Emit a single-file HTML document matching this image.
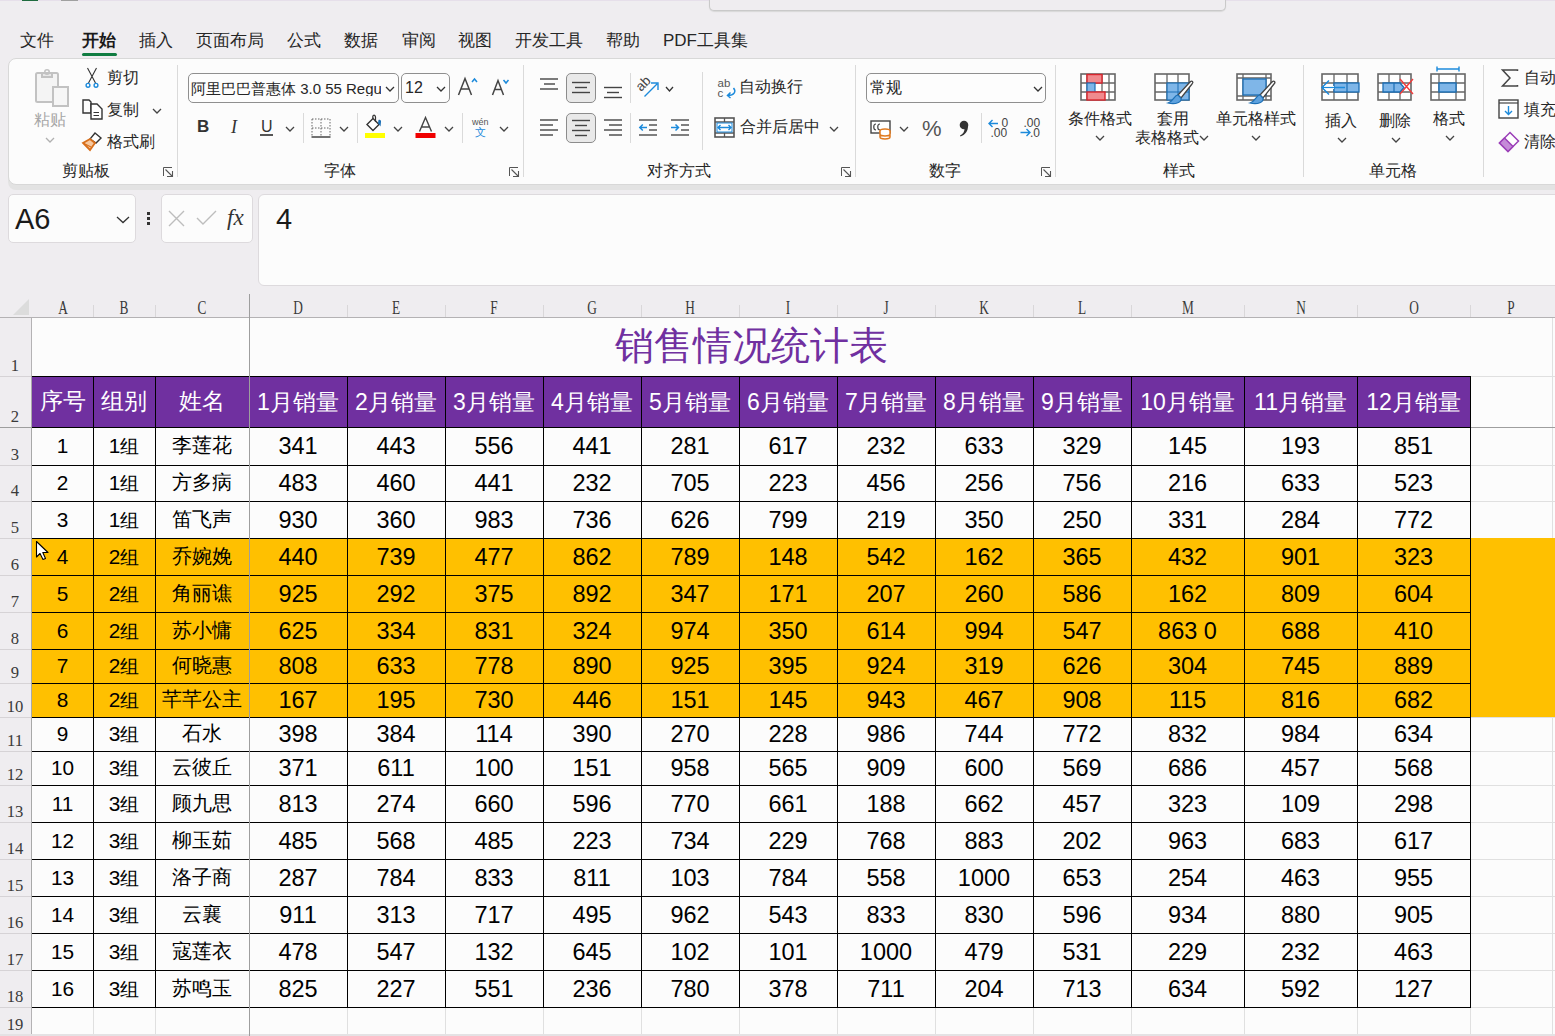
<!DOCTYPE html><html><head><meta charset="utf-8"><style>
html,body{margin:0;padding:0;}
body{width:1555px;height:1036px;overflow:hidden;position:relative;background:#EFEDF0;font-family:"Liberation Sans",sans-serif;color:#262626;}
.a{position:absolute;box-sizing:border-box;}
.t{position:absolute;white-space:nowrap;line-height:1;}
.rib{font-size:16px;color:#262626;}
.cell{font-size:20px;color:#000;}
.cell .dg{font-size:23.5px;}
.sm{font-size:19px;}
.sm .dg{font-size:20.8px;}
.hd{font-size:22.5px;color:#fff;}
.hd .dg{font-size:23px;}
.rn{font-family:"Liberation Serif",serif;font-size:17.5px;color:#3a3a3a;transform:scaleX(.95);}
.ch{font-family:"Liberation Serif",serif;font-size:18.5px;color:#3a3a3a;transform:scaleX(.72);}
svg{position:absolute;overflow:visible;}
</style></head><body>
<div class="a " style="left:0px;top:0px;width:1555px;height:1px;background:#E6DFEA;"></div>
<div class="a " style="left:709px;top:-20px;width:517px;height:31px;border:1px solid #C9C9C9;border-top:none;border-radius:0 0 5px 5px;background:#EFEDF0;box-shadow:0 1px 1px #D8D8D8;"></div>
<div class="a " style="left:22px;top:0px;width:16px;height:1px;background:#1F6B3F;"></div>
<div class="a " style="left:61px;top:0px;width:17px;height:1px;background:#A0A0A0;"></div>
<div class="t " style="left:20px;top:32px;font-size:17px;">文件</div>
<div class="t " style="left:82px;top:32px;font-size:17px;font-weight:bold;color:#1a1a1a;">开始</div>
<div class="t " style="left:139px;top:32px;font-size:17px;">插入</div>
<div class="t " style="left:196px;top:32px;font-size:17px;">页面布局</div>
<div class="t " style="left:287px;top:32px;font-size:17px;">公式</div>
<div class="t " style="left:344px;top:32px;font-size:17px;">数据</div>
<div class="t " style="left:402px;top:32px;font-size:17px;">审阅</div>
<div class="t " style="left:458px;top:32px;font-size:17px;">视图</div>
<div class="t " style="left:515px;top:32px;font-size:17px;">开发工具</div>
<div class="t " style="left:606px;top:32px;font-size:17px;">帮助</div>
<div class="t " style="left:663px;top:32px;font-size:17px;">PDF工具集</div>
<div class="a " style="left:82px;top:53px;width:35px;height:3px;background:#107C41;border-radius:2px;"></div>
<div class="a " style="left:8px;top:58px;width:1600px;height:127px;background:#FCFCFC;border:1px solid #D8D8D8;border-radius:8px;box-shadow:0 5px 0 #E3E3E3;"></div>
<svg style="left:35px;top:69px" width="35" height="39" viewBox="0 0 35 39"><rect x="1" y="4" width="22" height="29" rx="1.5" fill="#F4F4F4" stroke="#C2C2C2" stroke-width="2"/><path d="M7,4 h10 v4 h-10 z" fill="#E8E8E8" stroke="#C2C2C2" stroke-width="2"/><circle cx="12" cy="3" r="2.2" fill="none" stroke="#C2C2C2" stroke-width="1.6"/><rect x="18" y="18" width="15" height="19" fill="#F6F6F6" stroke="#C2C2C2" stroke-width="2"/></svg>
<div class="t rib" style="left:34px;top:112px;color:#A6A6A6;">粘贴</div>
<svg style="left:45px;top:137px" width="10" height="6" viewBox="0 0 10 6"><polyline points="1,1 5.0,5 9,1" fill="none" stroke="#B0B0B0" stroke-width="1.3"/></svg>
<svg style="left:84px;top:67px" width="17" height="22" viewBox="0 0 17 22"><path d="M3.5,1 L11.5,16 M12.5,1 L4.5,16" stroke="#333" stroke-width="1.1" fill="none"/><circle cx="4" cy="18.3" r="1.9" fill="#fff" stroke="#1C8ADB" stroke-width="1.4"/><circle cx="12" cy="18.3" r="1.9" fill="#fff" stroke="#1C8ADB" stroke-width="1.4"/></svg>
<div class="t rib" style="left:107px;top:70px;">剪切</div>
<svg style="left:82px;top:99px" width="22" height="22" viewBox="0 0 22 22"><path d="M1,1 H7 L9,3 V14 H1 Z" fill="none" stroke="#333" stroke-width="1.4"/><path d="M9,5 H15 L20,10 V20 H9 Z" fill="#fff" stroke="#333" stroke-width="1.4"/><path d="M11.5,13.5 H17 M11.5,16.5 H17" stroke="#333" stroke-width="1"/></svg>
<div class="t rib" style="left:107px;top:102px;">复制</div>
<svg style="left:152px;top:108px" width="10" height="6" viewBox="0 0 10 6"><polyline points="1,1 5.0,5 9,1" fill="none" stroke="#444" stroke-width="1.3"/></svg>
<svg style="left:81px;top:131px" width="22" height="21" viewBox="0 0 22 21"><path d="M14,2 L20,7 L15,12 L9,8 Z" fill="#fff" stroke="#333" stroke-width="1.4"/><path d="M9,8 L14,12 L9,19 L2,12 Z" fill="#F7C9A0" stroke="#D86F1B" stroke-width="1.8"/><path d="M2,12 L10,16" stroke="#D86F1B" stroke-width="1.2"/></svg>
<div class="t rib" style="left:107px;top:134px;">格式刷</div>
<div class="t rib" style="left:62px;top:163px;">剪贴板</div>
<svg style="left:163px;top:167px" width="11" height="11" viewBox="0 0 11 11"><path d="M0.5,9 V0.5 H9" fill="none" stroke="#555" stroke-width="1"/><path d="M2.5,2.5 L9.5,9.5 M4,9.5 H9.5 V4" fill="none" stroke="#555" stroke-width="1.1"/></svg>
<div class="a " style="left:177px;top:65px;width:1px;height:112px;background:#DADADA;"></div>
<div class="a " style="left:188px;top:73px;width:211px;height:30px;border:1px solid #8F8F8F;border-radius:5px;background:#FDFDFD;overflow:hidden;"></div>
<div class="t rib" style="left:191px;top:81px;width:190px;overflow:hidden;font-size:15px;">阿里巴巴普惠体 3.0 55 Regular</div>
<svg style="left:385px;top:86px" width="10" height="6" viewBox="0 0 10 6"><polyline points="1,1 5.0,5 9,1" fill="none" stroke="#333" stroke-width="1.3"/></svg>
<div class="a " style="left:401px;top:73px;width:49px;height:30px;border:1px solid #8F8F8F;border-radius:5px;background:#FDFDFD;"></div>
<div class="t rib" style="left:405px;top:80px;font-size:16px;">12</div>
<svg style="left:436px;top:86px" width="10" height="6" viewBox="0 0 10 6"><polyline points="1,1 5.0,5 9,1" fill="none" stroke="#333" stroke-width="1.3"/></svg>
<svg style="left:457px;top:76px" width="24" height="22" viewBox="0 0 24 22"><path d="M1.5,19 L8,2.5 L14.5,19 M4,13 H12" fill="none" stroke="#444" stroke-width="1.5"/><path d="M15,6 L17.5,3 L20,6" fill="none" stroke="#1C8ADB" stroke-width="1.5"/></svg>
<svg style="left:491px;top:77px" width="22" height="22" viewBox="0 0 22 22"><path d="M1.5,18 L7,3.5 L12.5,18 M3.6,12.5 H10.4" fill="none" stroke="#444" stroke-width="1.5"/><path d="M12.5,3 L15,6 L17.5,3" fill="none" stroke="#1C8ADB" stroke-width="1.5"/></svg>
<div class="t " style="left:197px;top:118px;font-weight:bold;font-size:17px;color:#333;">B</div>
<div class="t " style="left:231px;top:118px;font-family:'Liberation Serif',serif;font-style:italic;font-size:18px;color:#333;">I</div>
<div class="t " style="left:261px;top:119px;font-size:16px;color:#333;">U</div>
<div class="a " style="left:260px;top:134px;width:13px;height:1.5px;background:#555;"></div>
<svg style="left:285px;top:126px" width="10" height="6" viewBox="0 0 10 6"><polyline points="1,1 5.0,5 9,1" fill="none" stroke="#444" stroke-width="1.3"/></svg>
<div class="a " style="left:303px;top:113px;width:1px;height:30px;background:#DADADA;"></div>
<svg style="left:311px;top:118px" width="20" height="20" viewBox="0 0 20 20"><path d="M1,1 H19 V19 M1,1 V19 M10,1 V18 M1,10 H19" fill="none" stroke="#666" stroke-width="1" stroke-dasharray="1.5,1.5"/><path d="M0.5,19 H19.5" stroke="#444" stroke-width="1.5"/></svg>
<svg style="left:339px;top:126px" width="10" height="6" viewBox="0 0 10 6"><polyline points="1,1 5.0,5 9,1" fill="none" stroke="#444" stroke-width="1.3"/></svg>
<div class="a " style="left:357px;top:113px;width:1px;height:30px;background:#DADADA;"></div>
<svg style="left:364px;top:115px" width="24" height="25" viewBox="0 0 24 25"><path d="M3,9.5 L9,3.5 L15,9.5 L9,15.5 Z" fill="#fff" stroke="#333" stroke-width="1.4"/><path d="M9,3.5 C8,0 11,-1 11.5,2 V7" fill="none" stroke="#333" stroke-width="1.2"/><path d="M14.5,5 C16,4 17.5,5.5 17,7 L16.5,11.5 L14,8 Z" fill="#1C6FB5"/><rect x="1" y="18" width="20" height="5" fill="#FFFF00"/></svg>
<svg style="left:393px;top:126px" width="10" height="6" viewBox="0 0 10 6"><polyline points="1,1 5.0,5 9,1" fill="none" stroke="#444" stroke-width="1.3"/></svg>
<svg style="left:415px;top:115px" width="24" height="25" viewBox="0 0 24 25"><path d="M4.5,16.5 L10.5,2.5 L16.5,16.5 M6.5,12 H14.5" fill="none" stroke="#444" stroke-width="1.4"/><rect x="0.5" y="18" width="20" height="5" fill="#F00000"/></svg>
<svg style="left:444px;top:126px" width="10" height="6" viewBox="0 0 10 6"><polyline points="1,1 5.0,5 9,1" fill="none" stroke="#444" stroke-width="1.3"/></svg>
<div class="a " style="left:462px;top:113px;width:1px;height:30px;background:#DADADA;"></div>
<div class="t " style="left:472px;top:118px;font-size:9px;color:#555;">wén</div>
<div class="t " style="left:475px;top:127px;font-size:11px;color:#1C8ADB;">文</div>
<svg style="left:499px;top:126px" width="10" height="6" viewBox="0 0 10 6"><polyline points="1,1 5.0,5 9,1" fill="none" stroke="#444" stroke-width="1.3"/></svg>
<div class="t rib" style="left:140px;width:400px;text-align:center;top:163px;">字体</div>
<svg style="left:509px;top:167px" width="11" height="11" viewBox="0 0 11 11"><path d="M0.5,9 V0.5 H9" fill="none" stroke="#555" stroke-width="1"/><path d="M2.5,2.5 L9.5,9.5 M4,9.5 H9.5 V4" fill="none" stroke="#555" stroke-width="1.1"/></svg>
<div class="a " style="left:523px;top:65px;width:1px;height:112px;background:#DADADA;"></div>
<svg style="left:540px;top:75px" width="22" height="22" viewBox="0 0 22 22"><path d="M0,4H18" stroke="#444" stroke-width="1.4"/><path d="M4,9H15" stroke="#444" stroke-width="1.4"/><path d="M0,14H18" stroke="#444" stroke-width="1.4"/></svg>
<div class="a " style="left:566px;top:73px;width:30px;height:30px;background:#E9E9E9;border:1px solid #8C8C8C;border-radius:5px;"></div>
<svg style="left:571px;top:77px" width="22" height="22" viewBox="0 0 22 22"><path d="M1,5.5H19" stroke="#444" stroke-width="1.4"/><path d="M4,10.5H16" stroke="#444" stroke-width="1.4"/><path d="M1,15.5H19" stroke="#444" stroke-width="1.4"/></svg>
<svg style="left:604px;top:83px" width="22" height="22" viewBox="0 0 22 22"><path d="M0,4.5H18" stroke="#444" stroke-width="1.4"/><path d="M3,9.5H15" stroke="#444" stroke-width="1.4"/><path d="M0,14.5H18" stroke="#444" stroke-width="1.4"/></svg>
<div class="a " style="left:630px;top:73px;width:1px;height:30px;background:#DADADA;"></div>
<svg style="left:636px;top:75px" width="26" height="26" viewBox="0 0 26 26"><text x="0" y="0" font-size="13.5" fill="#444" font-family="Liberation Sans" transform="translate(5,17) rotate(-45)">ab</text><path d="M8.5,21.5 L21,9 M15,8 H22 V15" fill="none" stroke="#1C8ADB" stroke-width="1.4"/></svg>
<svg style="left:665px;top:86px" width="9" height="6" viewBox="0 0 9 6"><polyline points="1,1 4.5,5 8,1" fill="none" stroke="#333" stroke-width="1.3"/></svg>
<div class="a " style="left:702px;top:72px;width:1px;height:78px;background:#DADADA;"></div>
<svg style="left:716px;top:77px" width="22" height="22" viewBox="0 0 22 22"><text x="1.5" y="9.5" font-size="11.5" fill="#555" font-family="Liberation Sans">ab</text><text x="1.5" y="19.5" font-size="11.5" fill="#555" font-family="Liberation Sans">c</text><path d="M17.5,11 C20.5,14.5 18,18.5 12,18.5 M14.5,15.5 L11.5,18.5 L14.5,21" fill="none" stroke="#1C8ADB" stroke-width="1.5"/></svg>
<div class="t rib" style="left:739px;top:79px;">自动换行</div>
<svg style="left:540px;top:116px" width="22" height="22" viewBox="0 0 22 22"><path d="M0,4H18" stroke="#444" stroke-width="1.4"/><path d="M0,9H13" stroke="#444" stroke-width="1.4"/><path d="M0,14H18" stroke="#444" stroke-width="1.4"/><path d="M0,19H13" stroke="#444" stroke-width="1.4"/></svg>
<div class="a " style="left:566px;top:113px;width:30px;height:30px;background:#E9E9E9;border:1px solid #8C8C8C;border-radius:5px;"></div>
<svg style="left:571px;top:116px" width="22" height="22" viewBox="0 0 22 22"><path d="M1,4.5H19" stroke="#444" stroke-width="1.4"/><path d="M4,9.5H16" stroke="#444" stroke-width="1.4"/><path d="M1,14.5H19" stroke="#444" stroke-width="1.4"/><path d="M4,19.5H16" stroke="#444" stroke-width="1.4"/></svg>
<svg style="left:604px;top:116px" width="22" height="22" viewBox="0 0 22 22"><path d="M0,4H18" stroke="#444" stroke-width="1.4"/><path d="M5,9H18" stroke="#444" stroke-width="1.4"/><path d="M0,14H18" stroke="#444" stroke-width="1.4"/><path d="M5,19H18" stroke="#444" stroke-width="1.4"/></svg>
<div class="a " style="left:630px;top:113px;width:1px;height:30px;background:#DADADA;"></div>
<svg style="left:639px;top:116px" width="22" height="22" viewBox="0 0 22 22"><path d="M0,4H18 M10,9H18 M10,14H18 M0,19H18" stroke="#555" stroke-width="1.4"/><path d="M0.8,11.5H8 M3.8,8.5 L0.8,11.5 L3.8,14.5" fill="none" stroke="#1C8ADB" stroke-width="1.5"/></svg>
<svg style="left:671px;top:116px" width="22" height="22" viewBox="0 0 22 22"><path d="M0,4H18 M10,9H18 M10,14H18 M0,19H18" stroke="#555" stroke-width="1.4"/><path d="M0,11.5H7.5 M4.5,8.5 L7.5,11.5 L4.5,14.5" fill="none" stroke="#1C8ADB" stroke-width="1.5"/></svg>
<svg style="left:714px;top:117px" width="22" height="22" viewBox="0 0 22 22"><rect x="1" y="1" width="19" height="19" fill="#fff" stroke="#555" stroke-width="1.6"/><path d="M1,5H20 M1,16H20 M10.5,16V20 M10.5,1V5" stroke="#555" stroke-width="1.3"/><path d="M4,10.5H17 M6.5,8 L4,10.5 L6.5,13 M14.5,8 L17,10.5 L14.5,13" fill="none" stroke="#1C8ADB" stroke-width="1.4"/><rect x="3" y="6" width="15" height="9" fill="none" stroke="#1C8ADB" stroke-width="1"/></svg>
<div class="t rib" style="left:740px;top:119px;">合并后居中</div>
<svg style="left:829px;top:126px" width="10" height="6" viewBox="0 0 10 6"><polyline points="1,1 5.0,5 9,1" fill="none" stroke="#444" stroke-width="1.3"/></svg>
<div class="t rib" style="left:479px;width:400px;text-align:center;top:163px;">对齐方式</div>
<svg style="left:841px;top:167px" width="11" height="11" viewBox="0 0 11 11"><path d="M0.5,9 V0.5 H9" fill="none" stroke="#555" stroke-width="1"/><path d="M2.5,2.5 L9.5,9.5 M4,9.5 H9.5 V4" fill="none" stroke="#555" stroke-width="1.1"/></svg>
<div class="a " style="left:855px;top:65px;width:1px;height:112px;background:#DADADA;"></div>
<div class="a " style="left:866px;top:73px;width:180px;height:30px;border:1px solid #8F8F8F;border-radius:5px;background:#FDFDFD;"></div>
<div class="t rib" style="left:870px;top:80px;">常规</div>
<svg style="left:1033px;top:86px" width="10" height="6" viewBox="0 0 10 6"><polyline points="1,1 5.0,5 9,1" fill="none" stroke="#333" stroke-width="1.3"/></svg>
<svg style="left:870px;top:119px" width="24" height="22" viewBox="0 0 24 22"><rect x="1" y="2" width="19" height="12" fill="#fff" stroke="#444" stroke-width="1.4"/><path d="M6,5 C3,5 3,11 6,11 M10,5 C7,5 7,11 10,11" fill="none" stroke="#444" stroke-width="1.2"/><ellipse cx="15" cy="12" rx="5" ry="2" fill="#fff" stroke="#E07A1F" stroke-width="1.5"/><path d="M10,12 V18 C10,20.5 20,20.5 20,18 V12 M10,15 C10,17.5 20,17.5 20,15" fill="#fff" stroke="#E07A1F" stroke-width="1.5"/></svg>
<svg style="left:899px;top:126px" width="10" height="6" viewBox="0 0 10 6"><polyline points="1,1 5.0,5 9,1" fill="none" stroke="#444" stroke-width="1.3"/></svg>
<div class="t " style="left:922px;top:118px;font-size:22px;color:#555;">%</div>
<svg style="left:958px;top:120px" width="12" height="17" viewBox="0 0 12 17"><circle cx="6" cy="5" r="4.3" fill="#333"/><path d="M9.8,6 C10.5,11 7,15 2.5,16.5 L2,15.5 C5,14 6.5,11.5 6.5,9 Z" fill="#333"/></svg>
<div class="a " style="left:981px;top:113px;width:1px;height:30px;background:#DADADA;"></div>
<svg style="left:988px;top:117px" width="22" height="22" viewBox="0 0 22 22"><path d="M1,6.5H10 M4.5,3 L1,6.5 L4.5,10" fill="none" stroke="#1C8ADB" stroke-width="1.4"/><text x="13.5" y="9.5" font-size="12" fill="#444" font-family="Liberation Sans">0</text><text x="2.5" y="20" font-size="12" fill="#444" font-family="Liberation Sans">.00</text></svg>
<svg style="left:1020px;top:117px" width="22" height="22" viewBox="0 0 22 22"><text x="3.5" y="9.5" font-size="12" fill="#444" font-family="Liberation Sans">.00</text><path d="M0.5,15.5H10 M6.5,12 L10,15.5 L6.5,19" fill="none" stroke="#1C8ADB" stroke-width="1.4"/><text x="10" y="20" font-size="12" fill="#444" font-family="Liberation Sans">.0</text></svg>
<div class="t rib" style="left:745px;width:400px;text-align:center;top:163px;">数字</div>
<svg style="left:1041px;top:167px" width="11" height="11" viewBox="0 0 11 11"><path d="M0.5,9 V0.5 H9" fill="none" stroke="#555" stroke-width="1"/><path d="M2.5,2.5 L9.5,9.5 M4,9.5 H9.5 V4" fill="none" stroke="#555" stroke-width="1.1"/></svg>
<div class="a " style="left:1055px;top:65px;width:1px;height:112px;background:#DADADA;"></div>
<svg style="left:1080px;top:73px" width="42" height="34" viewBox="0 0 42 34"><rect x="1" y="1" width="34" height="26" fill="#fff" stroke="#666" stroke-width="1.6"/><path d="M7,1V27" stroke="#666" stroke-width="1.3"/><path d="M22,1V27" stroke="#666" stroke-width="1.3"/><path d="M29,1V27" stroke="#666" stroke-width="1.3"/><path d="M1,10H35" stroke="#666" stroke-width="1.3"/><path d="M1,19H35" stroke="#666" stroke-width="1.3"/><rect x="7" y="1.5" width="15" height="8.5" fill="#F08A8E" stroke="#D9262E" stroke-width="1.4"/><rect x="7" y="10" width="8" height="9" fill="#7FB6E8" stroke="#1C6FB5" stroke-width="1.2"/><rect x="7" y="19" width="18" height="8" fill="#F08A8E" stroke="#D9262E" stroke-width="1.4"/></svg>
<div class="t rib" style="left:1068px;top:111px;">条件格式</div>
<svg style="left:1095px;top:135px" width="10" height="6" viewBox="0 0 10 6"><polyline points="1,1 5.0,5 9,1" fill="none" stroke="#444" stroke-width="1.3"/></svg>
<svg style="left:1154px;top:73px" width="42" height="34" viewBox="0 0 42 34"><rect x="1" y="1" width="34" height="26" fill="#fff" stroke="#666" stroke-width="1.6"/><path d="M13,1V27" stroke="#666" stroke-width="1.3"/><path d="M24,1V27" stroke="#666" stroke-width="1.3"/><path d="M1,10H35" stroke="#666" stroke-width="1.3"/><path d="M1,19H35" stroke="#666" stroke-width="1.3"/><rect x="13" y="10" width="22" height="17" fill="#7FB6E8" stroke="#1C6FB5" stroke-width="1.2"/><path d="M24,10V27 M13,19H35" stroke="#1C6FB5" stroke-width="1"/><path d="M36,9 C38,7 40,9 38,11 L27,25 L24,22 Z" fill="#fff" stroke="#444" stroke-width="1.3"/><path d="M24,22 C20,22 20,28 14,30 C22,32 28,29 27,25 Z" fill="#5DA1DE" stroke="#1C6FB5" stroke-width="1.2"/></svg>
<div class="t rib" style="left:1157px;top:111px;">套用</div>
<div class="t rib" style="left:1135px;top:130px;">表格格式</div>
<svg style="left:1199px;top:135px" width="10" height="6" viewBox="0 0 10 6"><polyline points="1,1 5.0,5 9,1" fill="none" stroke="#444" stroke-width="1.3"/></svg>
<svg style="left:1236px;top:73px" width="42" height="34" viewBox="0 0 42 34"><rect x="1" y="1" width="34" height="26" fill="#fff" stroke="#666" stroke-width="1.6"/><path d="M7,1V27" stroke="#666" stroke-width="1.3"/><path d="M30,1V27" stroke="#666" stroke-width="1.3"/><path d="M1,5H35" stroke="#666" stroke-width="1.3"/><path d="M1,23H35" stroke="#666" stroke-width="1.3"/><rect x="7" y="6" width="23" height="16" fill="#7FB6E8" stroke="#1C6FB5" stroke-width="1.3"/><path d="M36,9 C38,7 40,9 38,11 L27,25 L24,22 Z" fill="#fff" stroke="#444" stroke-width="1.3"/><path d="M24,22 C20,22 20,28 14,30 C22,32 28,29 27,25 Z" fill="#5DA1DE" stroke="#1C6FB5" stroke-width="1.2"/></svg>
<div class="t rib" style="left:1216px;top:111px;">单元格样式</div>
<svg style="left:1251px;top:135px" width="10" height="6" viewBox="0 0 10 6"><polyline points="1,1 5.0,5 9,1" fill="none" stroke="#444" stroke-width="1.3"/></svg>
<div class="t rib" style="left:979px;width:400px;text-align:center;top:163px;">样式</div>
<div class="a " style="left:1303px;top:65px;width:1px;height:112px;background:#DADADA;"></div>
<svg style="left:1321px;top:73px" width="44" height="34" viewBox="0 0 44 34"><rect x="1" y="1" width="36" height="26" fill="#fff" stroke="#666" stroke-width="1.6"/><path d="M13,1V27" stroke="#666" stroke-width="1.3"/><path d="M26,1V27" stroke="#666" stroke-width="1.3"/><path d="M1,10H37" stroke="#666" stroke-width="1.3"/><path d="M1,19H37" stroke="#666" stroke-width="1.3"/><rect x="13" y="10" width="25" height="9" fill="#7FB6E8" stroke="#1C6FB5" stroke-width="1.3"/><path d="M26,10V19" stroke="#1C6FB5" stroke-width="1.2"/><path d="M1,14.5H24 M8,7.5 L1,14.5 L8,21.5" fill="none" stroke="#1C8ADB" stroke-width="1.5"/><path d="M3,13 H13 V16 H3 Z" fill="#fff" stroke="none"/><path d="M2,14.5H14" stroke="#1C8ADB" stroke-width="1.2"/></svg>
<div class="t rib" style="left:1325px;top:113px;">插入</div>
<svg style="left:1337px;top:137px" width="10" height="6" viewBox="0 0 10 6"><polyline points="1,1 5.0,5 9,1" fill="none" stroke="#444" stroke-width="1.3"/></svg>
<svg style="left:1377px;top:73px" width="41" height="34" viewBox="0 0 41 34"><rect x="1" y="1" width="33" height="26" fill="#fff" stroke="#666" stroke-width="1.6"/><path d="M12,1V27" stroke="#666" stroke-width="1.3"/><path d="M23,1V27" stroke="#666" stroke-width="1.3"/><path d="M1,10H34" stroke="#666" stroke-width="1.3"/><path d="M1,19H34" stroke="#666" stroke-width="1.3"/><path d="M6,10 H23 L27,14.5 L23,19 H6 Z" fill="#7FB6E8" stroke="#1C6FB5" stroke-width="1.3"/><path d="M17,10V19" stroke="#1C6FB5" stroke-width="1.2"/><path d="M23,6 L36,21 M36,6 L23,21" stroke="#F03C3C" stroke-width="1.4"/></svg>
<div class="t rib" style="left:1379px;top:113px;">删除</div>
<svg style="left:1391px;top:137px" width="10" height="6" viewBox="0 0 10 6"><polyline points="1,1 5.0,5 9,1" fill="none" stroke="#444" stroke-width="1.3"/></svg>
<svg style="left:1430px;top:73px" width="42" height="34" viewBox="0 0 42 34"><rect x="1" y="1" width="34" height="26" fill="#fff" stroke="#666" stroke-width="1.6"/><path d="M9,1V27" stroke="#666" stroke-width="1.3"/><path d="M26,1V27" stroke="#666" stroke-width="1.3"/><path d="M1,10H35" stroke="#666" stroke-width="1.3"/><path d="M1,19H35" stroke="#666" stroke-width="1.3"/><rect x="9" y="10" width="17" height="9" fill="#7FB6E8" stroke="#1C6FB5" stroke-width="1.4"/></svg>
<svg style="left:1436px;top:66px" width="24" height="6" viewBox="0 0 24 6"><path d="M1,0.5V5.5 M23,0.5V5.5 M1,3H23" stroke="#1C8ADB" stroke-width="1.4"/></svg>
<div class="t rib" style="left:1433px;top:111px;">格式</div>
<svg style="left:1445px;top:135px" width="10" height="6" viewBox="0 0 10 6"><polyline points="1,1 5.0,5 9,1" fill="none" stroke="#444" stroke-width="1.3"/></svg>
<div class="t rib" style="left:1193px;width:400px;text-align:center;top:163px;">单元格</div>
<div class="a " style="left:1483px;top:65px;width:1px;height:112px;background:#DADADA;"></div>
<svg style="left:1501px;top:69px" width="18" height="19" viewBox="0 0 18 19"><path d="M16.5,2 V1 H1.5 L9,9 L1.5,17 H16.5 V16" fill="none" stroke="#444" stroke-width="1.5"/></svg>
<div class="t rib" style="left:1524px;top:70px;">自动求和</div>
<svg style="left:1498px;top:99px" width="22" height="21" viewBox="0 0 22 21"><rect x="1" y="1" width="19" height="18" fill="#fff" stroke="#444" stroke-width="1.4"/><path d="M1,4H20" stroke="#444" stroke-width="1.2"/><path d="M10.5,7V15 M7,12 L10.5,15.5 L14,12" fill="none" stroke="#1C8ADB" stroke-width="1.4"/></svg>
<div class="t rib" style="left:1524px;top:102px;">填充</div>
<svg style="left:1498px;top:131px" width="22" height="22" viewBox="0 0 22 22"><path d="M12,1.5 L20.5,10 L10,20.5 L1.5,12 Z" fill="#fff" stroke="#9B3FB8" stroke-width="1.5"/><path d="M1.5,12 L6.5,7 L15,15.5 L10,20.5 Z" fill="#C58BD8" stroke="#9B3FB8" stroke-width="1.5"/></svg>
<div class="t rib" style="left:1524px;top:134px;">清除</div>
<div class="a " style="left:8px;top:194px;width:128px;height:49px;background:#FCFCFC;border:1px solid #DDDADD;border-radius:5px;"></div>
<div class="t " style="left:15px;top:205px;font-size:29px;color:#1a1a1a;">A6</div>
<svg style="left:116px;top:216px" width="14" height="7.5" viewBox="0 0 14 7.5"><polyline points="1,1 7.0,6.5 13,1" fill="none" stroke="#333" stroke-width="1.3"/></svg>
<svg style="left:147px;top:212px" width="4" height="14" viewBox="0 0 4 14"><rect x="0" y="0" width="3" height="3" fill="#333"/><rect x="0" y="5" width="3" height="3" fill="#333"/><rect x="0" y="10" width="3" height="3" fill="#333"/></svg>
<div class="a " style="left:161px;top:194px;width:92px;height:49px;background:#FCFCFC;border:1px solid #DDDADD;border-radius:5px;"></div>
<svg style="left:168px;top:210px" width="18" height="18" viewBox="0 0 18 18"><path d="M1,1 L16,16 M16,1 L1,16" stroke="#BDBDBD" stroke-width="1.4"/></svg>
<svg style="left:196px;top:210px" width="22" height="16" viewBox="0 0 22 16"><path d="M1,8 L7,14 L20,1" fill="none" stroke="#BDBDBD" stroke-width="1.4"/></svg>
<div class="t " style="left:227px;top:206px;font-family:'Liberation Serif',serif;font-size:23px;color:#333;"><i>fx</i></div>
<div class="a " style="left:258px;top:194px;width:1320px;height:92px;background:#FCFCFC;border:1px solid #DDDADD;border-radius:6px;"></div>
<div class="t " style="left:276px;top:205px;font-size:29px;color:#1a1a1a;">4</div>
<div class="t ch" style="left:-137.5px;width:400px;text-align:center;top:299px;">A</div>
<div class="t ch" style="left:-76.0px;width:400px;text-align:center;top:299px;">B</div>
<div class="a " style="left:93px;top:305px;width:1px;height:12px;background:#D9D7D9;"></div>
<div class="t ch" style="left:2.0px;width:400px;text-align:center;top:299px;">C</div>
<div class="a " style="left:155px;top:305px;width:1px;height:12px;background:#D9D7D9;"></div>
<div class="t ch" style="left:98.0px;width:400px;text-align:center;top:299px;">D</div>
<div class="a " style="left:249px;top:305px;width:1px;height:12px;background:#D9D7D9;"></div>
<div class="t ch" style="left:196.0px;width:400px;text-align:center;top:299px;">E</div>
<div class="a " style="left:347px;top:305px;width:1px;height:12px;background:#D9D7D9;"></div>
<div class="t ch" style="left:294.0px;width:400px;text-align:center;top:299px;">F</div>
<div class="a " style="left:445px;top:305px;width:1px;height:12px;background:#D9D7D9;"></div>
<div class="t ch" style="left:392.0px;width:400px;text-align:center;top:299px;">G</div>
<div class="a " style="left:543px;top:305px;width:1px;height:12px;background:#D9D7D9;"></div>
<div class="t ch" style="left:490.0px;width:400px;text-align:center;top:299px;">H</div>
<div class="a " style="left:641px;top:305px;width:1px;height:12px;background:#D9D7D9;"></div>
<div class="t ch" style="left:588.0px;width:400px;text-align:center;top:299px;">I</div>
<div class="a " style="left:739px;top:305px;width:1px;height:12px;background:#D9D7D9;"></div>
<div class="t ch" style="left:686.0px;width:400px;text-align:center;top:299px;">J</div>
<div class="a " style="left:837px;top:305px;width:1px;height:12px;background:#D9D7D9;"></div>
<div class="t ch" style="left:784.0px;width:400px;text-align:center;top:299px;">K</div>
<div class="a " style="left:935px;top:305px;width:1px;height:12px;background:#D9D7D9;"></div>
<div class="t ch" style="left:882.0px;width:400px;text-align:center;top:299px;">L</div>
<div class="a " style="left:1033px;top:305px;width:1px;height:12px;background:#D9D7D9;"></div>
<div class="t ch" style="left:987.5px;width:400px;text-align:center;top:299px;">M</div>
<div class="a " style="left:1131px;top:305px;width:1px;height:12px;background:#D9D7D9;"></div>
<div class="t ch" style="left:1100.5px;width:400px;text-align:center;top:299px;">N</div>
<div class="a " style="left:1244px;top:305px;width:1px;height:12px;background:#D9D7D9;"></div>
<div class="t ch" style="left:1213.5px;width:400px;text-align:center;top:299px;">O</div>
<div class="a " style="left:1357px;top:305px;width:1px;height:12px;background:#D9D7D9;"></div>
<div class="t ch" style="left:1311px;width:400px;text-align:center;top:299px;">P</div>
<div class="a " style="left:1470px;top:305px;width:1px;height:12px;background:#D9D7D9;"></div>
<div class="a " style="left:0px;top:317px;width:1555px;height:1px;background:#B4B2B4;"></div>
<svg style="left:11px;top:298px" width="20" height="18" viewBox="0 0 20 18"><path d="M18,1 L18,17 L2,17 Z" fill="#DCDCDC"/></svg>
<div class="a " style="left:31px;top:317px;width:1px;height:719px;background:#B4B2B4;"></div>
<div class="a " style="left:32px;top:318px;width:1523px;height:718px;background:#FCFCFC;"></div>
<div class="t rn" style="left:-185.5px;width:400px;text-align:center;top:357px;">1</div>
<div class="t rn" style="left:-185.5px;width:400px;text-align:center;top:408px;">2</div>
<div class="a " style="left:0px;top:376px;width:31px;height:1px;background:#D6D3D6;"></div>
<div class="t rn" style="left:-185.5px;width:400px;text-align:center;top:446px;">3</div>
<div class="a " style="left:0px;top:427px;width:31px;height:1px;background:#D6D3D6;"></div>
<div class="t rn" style="left:-185.5px;width:400px;text-align:center;top:482px;">4</div>
<div class="a " style="left:0px;top:465px;width:31px;height:1px;background:#D6D3D6;"></div>
<div class="t rn" style="left:-185.5px;width:400px;text-align:center;top:519px;">5</div>
<div class="a " style="left:0px;top:501px;width:31px;height:1px;background:#D6D3D6;"></div>
<div class="t rn" style="left:-185.5px;width:400px;text-align:center;top:556px;">6</div>
<div class="a " style="left:0px;top:538px;width:31px;height:1px;background:#D6D3D6;"></div>
<div class="t rn" style="left:-185.5px;width:400px;text-align:center;top:593px;">7</div>
<div class="a " style="left:0px;top:575px;width:31px;height:1px;background:#D6D3D6;"></div>
<div class="t rn" style="left:-185.5px;width:400px;text-align:center;top:630px;">8</div>
<div class="a " style="left:0px;top:612px;width:31px;height:1px;background:#D6D3D6;"></div>
<div class="t rn" style="left:-185.5px;width:400px;text-align:center;top:664px;">9</div>
<div class="a " style="left:0px;top:649px;width:31px;height:1px;background:#D6D3D6;"></div>
<div class="t rn" style="left:-185.5px;width:400px;text-align:center;top:698px;">10</div>
<div class="a " style="left:0px;top:683px;width:31px;height:1px;background:#D6D3D6;"></div>
<div class="t rn" style="left:-185.5px;width:400px;text-align:center;top:732px;">11</div>
<div class="a " style="left:0px;top:717px;width:31px;height:1px;background:#D6D3D6;"></div>
<div class="t rn" style="left:-185.5px;width:400px;text-align:center;top:766px;">12</div>
<div class="a " style="left:0px;top:751px;width:31px;height:1px;background:#D6D3D6;"></div>
<div class="t rn" style="left:-185.5px;width:400px;text-align:center;top:803px;">13</div>
<div class="a " style="left:0px;top:785px;width:31px;height:1px;background:#D6D3D6;"></div>
<div class="t rn" style="left:-185.5px;width:400px;text-align:center;top:840px;">14</div>
<div class="a " style="left:0px;top:822px;width:31px;height:1px;background:#D6D3D6;"></div>
<div class="t rn" style="left:-185.5px;width:400px;text-align:center;top:877px;">15</div>
<div class="a " style="left:0px;top:859px;width:31px;height:1px;background:#D6D3D6;"></div>
<div class="t rn" style="left:-185.5px;width:400px;text-align:center;top:914px;">16</div>
<div class="a " style="left:0px;top:896px;width:31px;height:1px;background:#D6D3D6;"></div>
<div class="t rn" style="left:-185.5px;width:400px;text-align:center;top:951px;">17</div>
<div class="a " style="left:0px;top:933px;width:31px;height:1px;background:#D6D3D6;"></div>
<div class="t rn" style="left:-185.5px;width:400px;text-align:center;top:988px;">18</div>
<div class="a " style="left:0px;top:970px;width:31px;height:1px;background:#D6D3D6;"></div>
<div class="t rn" style="left:-185.5px;width:400px;text-align:center;top:1016px;">19</div>
<div class="a " style="left:0px;top:1007px;width:31px;height:1px;background:#D6D3D6;"></div>
<div class="a " style="left:1470px;top:376px;width:100px;height:1px;background:#E0E0E0;"></div>
<div class="a " style="left:1470px;top:427px;width:100px;height:1px;background:#E0E0E0;"></div>
<div class="a " style="left:1470px;top:465px;width:100px;height:1px;background:#E0E0E0;"></div>
<div class="a " style="left:1470px;top:501px;width:100px;height:1px;background:#E0E0E0;"></div>
<div class="a " style="left:1470px;top:538px;width:100px;height:1px;background:#E0E0E0;"></div>
<div class="a " style="left:1470px;top:575px;width:100px;height:1px;background:#E0E0E0;"></div>
<div class="a " style="left:1470px;top:612px;width:100px;height:1px;background:#E0E0E0;"></div>
<div class="a " style="left:1470px;top:649px;width:100px;height:1px;background:#E0E0E0;"></div>
<div class="a " style="left:1470px;top:683px;width:100px;height:1px;background:#E0E0E0;"></div>
<div class="a " style="left:1470px;top:717px;width:100px;height:1px;background:#E0E0E0;"></div>
<div class="a " style="left:1470px;top:751px;width:100px;height:1px;background:#E0E0E0;"></div>
<div class="a " style="left:1470px;top:785px;width:100px;height:1px;background:#E0E0E0;"></div>
<div class="a " style="left:1470px;top:822px;width:100px;height:1px;background:#E0E0E0;"></div>
<div class="a " style="left:1470px;top:859px;width:100px;height:1px;background:#E0E0E0;"></div>
<div class="a " style="left:1470px;top:896px;width:100px;height:1px;background:#E0E0E0;"></div>
<div class="a " style="left:1470px;top:933px;width:100px;height:1px;background:#E0E0E0;"></div>
<div class="a " style="left:1470px;top:970px;width:100px;height:1px;background:#E0E0E0;"></div>
<div class="a " style="left:1470px;top:1007px;width:100px;height:1px;background:#E0E0E0;"></div>
<div class="a " style="left:32px;top:1007px;width:1523px;height:1px;background:#E0E0E0;"></div>
<div class="a " style="left:93px;top:1007px;width:1px;height:40px;background:#E0E0E0;"></div>
<div class="a " style="left:155px;top:1007px;width:1px;height:40px;background:#E0E0E0;"></div>
<div class="a " style="left:249px;top:1007px;width:1px;height:40px;background:#E0E0E0;"></div>
<div class="a " style="left:347px;top:1007px;width:1px;height:40px;background:#E0E0E0;"></div>
<div class="a " style="left:445px;top:1007px;width:1px;height:40px;background:#E0E0E0;"></div>
<div class="a " style="left:543px;top:1007px;width:1px;height:40px;background:#E0E0E0;"></div>
<div class="a " style="left:641px;top:1007px;width:1px;height:40px;background:#E0E0E0;"></div>
<div class="a " style="left:739px;top:1007px;width:1px;height:40px;background:#E0E0E0;"></div>
<div class="a " style="left:837px;top:1007px;width:1px;height:40px;background:#E0E0E0;"></div>
<div class="a " style="left:935px;top:1007px;width:1px;height:40px;background:#E0E0E0;"></div>
<div class="a " style="left:1033px;top:1007px;width:1px;height:40px;background:#E0E0E0;"></div>
<div class="a " style="left:1131px;top:1007px;width:1px;height:40px;background:#E0E0E0;"></div>
<div class="a " style="left:1244px;top:1007px;width:1px;height:40px;background:#E0E0E0;"></div>
<div class="a " style="left:1357px;top:1007px;width:1px;height:40px;background:#E0E0E0;"></div>
<div class="a " style="left:1470px;top:1007px;width:1px;height:40px;background:#E0E0E0;"></div>
<div class="a " style="left:1600px;top:1007px;width:1px;height:40px;background:#E0E0E0;"></div>
<div class="a " style="left:1552px;top:318px;width:1px;height:718px;background:#E0E0E0;"></div>
<div class="a " style="left:0px;top:1034px;width:1555px;height:2px;background:#E4E2E4;"></div>
<div class="a " style="left:32px;top:538px;width:1523px;height:179px;background:#FFC000;"></div>
<div class="a " style="left:32px;top:376px;width:1438px;height:51px;background:#7030A0;"></div>
<div class="t " style="left:551px;width:400px;text-align:center;top:326px;font-size:39px;color:#7030A0;">销售情况统计表</div>
<div class="a " style="left:32px;top:376px;width:1439px;height:1px;background:#000;"></div>
<div class="a " style="left:32px;top:427px;width:1439px;height:1px;background:#000;"></div>
<div class="a " style="left:32px;top:465px;width:1439px;height:1px;background:#000;"></div>
<div class="a " style="left:32px;top:501px;width:1439px;height:1px;background:#000;"></div>
<div class="a " style="left:32px;top:538px;width:1439px;height:1px;background:#000;"></div>
<div class="a " style="left:32px;top:575px;width:1439px;height:1px;background:#000;"></div>
<div class="a " style="left:32px;top:612px;width:1439px;height:1px;background:#000;"></div>
<div class="a " style="left:32px;top:649px;width:1439px;height:1px;background:#000;"></div>
<div class="a " style="left:32px;top:683px;width:1439px;height:1px;background:#000;"></div>
<div class="a " style="left:32px;top:717px;width:1439px;height:1px;background:#000;"></div>
<div class="a " style="left:32px;top:751px;width:1439px;height:1px;background:#000;"></div>
<div class="a " style="left:32px;top:785px;width:1439px;height:1px;background:#000;"></div>
<div class="a " style="left:32px;top:822px;width:1439px;height:1px;background:#000;"></div>
<div class="a " style="left:32px;top:859px;width:1439px;height:1px;background:#000;"></div>
<div class="a " style="left:32px;top:896px;width:1439px;height:1px;background:#000;"></div>
<div class="a " style="left:32px;top:933px;width:1439px;height:1px;background:#000;"></div>
<div class="a " style="left:32px;top:970px;width:1439px;height:1px;background:#000;"></div>
<div class="a " style="left:32px;top:1007px;width:1439px;height:1px;background:#000;"></div>
<div class="a " style="left:31px;top:376px;width:1px;height:632px;background:#A8A8A8;"></div>
<div class="a " style="left:93px;top:376px;width:1px;height:632px;background:#000;"></div>
<div class="a " style="left:155px;top:376px;width:1px;height:632px;background:#000;"></div>
<div class="a " style="left:249px;top:376px;width:1px;height:632px;background:#000;"></div>
<div class="a " style="left:347px;top:376px;width:1px;height:632px;background:#000;"></div>
<div class="a " style="left:445px;top:376px;width:1px;height:632px;background:#000;"></div>
<div class="a " style="left:543px;top:376px;width:1px;height:632px;background:#000;"></div>
<div class="a " style="left:641px;top:376px;width:1px;height:632px;background:#000;"></div>
<div class="a " style="left:739px;top:376px;width:1px;height:632px;background:#000;"></div>
<div class="a " style="left:837px;top:376px;width:1px;height:632px;background:#000;"></div>
<div class="a " style="left:935px;top:376px;width:1px;height:632px;background:#000;"></div>
<div class="a " style="left:1033px;top:376px;width:1px;height:632px;background:#000;"></div>
<div class="a " style="left:1131px;top:376px;width:1px;height:632px;background:#000;"></div>
<div class="a " style="left:1244px;top:376px;width:1px;height:632px;background:#000;"></div>
<div class="a " style="left:1357px;top:376px;width:1px;height:632px;background:#000;"></div>
<div class="a " style="left:1470px;top:376px;width:1px;height:632px;background:#000;"></div>
<div class="a " style="left:249px;top:294px;width:1px;height:742px;background:#9E9E9E;"></div>
<div class="a " style="left:0px;top:427px;width:32px;height:1px;background:#9E9E9E;"></div>
<div class="a " style="left:1471px;top:427px;width:84px;height:1px;background:#9E9E9E;"></div>
<div class="t hd" style="left:-137.5px;width:400px;text-align:center;top:391px;">序号</div>
<div class="t hd" style="left:-76.0px;width:400px;text-align:center;top:391px;">组别</div>
<div class="t hd" style="left:2.0px;width:400px;text-align:center;top:391px;">姓名</div>
<div class="t hd" style="left:98.0px;width:400px;text-align:center;top:391px;"><span class="dg">1</span>月销量</div>
<div class="t hd" style="left:196.0px;width:400px;text-align:center;top:391px;"><span class="dg">2</span>月销量</div>
<div class="t hd" style="left:294.0px;width:400px;text-align:center;top:391px;"><span class="dg">3</span>月销量</div>
<div class="t hd" style="left:392.0px;width:400px;text-align:center;top:391px;"><span class="dg">4</span>月销量</div>
<div class="t hd" style="left:490.0px;width:400px;text-align:center;top:391px;"><span class="dg">5</span>月销量</div>
<div class="t hd" style="left:588.0px;width:400px;text-align:center;top:391px;"><span class="dg">6</span>月销量</div>
<div class="t hd" style="left:686.0px;width:400px;text-align:center;top:391px;"><span class="dg">7</span>月销量</div>
<div class="t hd" style="left:784.0px;width:400px;text-align:center;top:391px;"><span class="dg">8</span>月销量</div>
<div class="t hd" style="left:882.0px;width:400px;text-align:center;top:391px;"><span class="dg">9</span>月销量</div>
<div class="t hd" style="left:987.5px;width:400px;text-align:center;top:391px;"><span class="dg">10</span>月销量</div>
<div class="t hd" style="left:1100.5px;width:400px;text-align:center;top:391px;"><span class="dg">11</span>月销量</div>
<div class="t hd" style="left:1213.5px;width:400px;text-align:center;top:391px;"><span class="dg">12</span>月销量</div>
<div class="t cell sm" style="left:-137.5px;width:400px;text-align:center;top:436.0px;"><span class="dg">1</span></div>
<div class="t cell sm" style="left:-76.0px;width:400px;text-align:center;top:436.0px;"><span class="dg">1</span>组</div>
<div class="t cell" style="left:2.0px;width:400px;text-align:center;top:435.0px;">李莲花</div>
<div class="t cell" style="left:98.0px;width:400px;text-align:center;top:435.0px;"><span class="dg">341</span></div>
<div class="t cell" style="left:196.0px;width:400px;text-align:center;top:435.0px;"><span class="dg">443</span></div>
<div class="t cell" style="left:294.0px;width:400px;text-align:center;top:435.0px;"><span class="dg">556</span></div>
<div class="t cell" style="left:392.0px;width:400px;text-align:center;top:435.0px;"><span class="dg">441</span></div>
<div class="t cell" style="left:490.0px;width:400px;text-align:center;top:435.0px;"><span class="dg">281</span></div>
<div class="t cell" style="left:588.0px;width:400px;text-align:center;top:435.0px;"><span class="dg">617</span></div>
<div class="t cell" style="left:686.0px;width:400px;text-align:center;top:435.0px;"><span class="dg">232</span></div>
<div class="t cell" style="left:784.0px;width:400px;text-align:center;top:435.0px;"><span class="dg">633</span></div>
<div class="t cell" style="left:882.0px;width:400px;text-align:center;top:435.0px;"><span class="dg">329</span></div>
<div class="t cell" style="left:987.5px;width:400px;text-align:center;top:435.0px;"><span class="dg">145</span></div>
<div class="t cell" style="left:1100.5px;width:400px;text-align:center;top:435.0px;"><span class="dg">193</span></div>
<div class="t cell" style="left:1213.5px;width:400px;text-align:center;top:435.0px;"><span class="dg">851</span></div>
<div class="t cell sm" style="left:-137.5px;width:400px;text-align:center;top:473.0px;"><span class="dg">2</span></div>
<div class="t cell sm" style="left:-76.0px;width:400px;text-align:center;top:473.0px;"><span class="dg">1</span>组</div>
<div class="t cell" style="left:2.0px;width:400px;text-align:center;top:472.0px;">方多病</div>
<div class="t cell" style="left:98.0px;width:400px;text-align:center;top:472.0px;"><span class="dg">483</span></div>
<div class="t cell" style="left:196.0px;width:400px;text-align:center;top:472.0px;"><span class="dg">460</span></div>
<div class="t cell" style="left:294.0px;width:400px;text-align:center;top:472.0px;"><span class="dg">441</span></div>
<div class="t cell" style="left:392.0px;width:400px;text-align:center;top:472.0px;"><span class="dg">232</span></div>
<div class="t cell" style="left:490.0px;width:400px;text-align:center;top:472.0px;"><span class="dg">705</span></div>
<div class="t cell" style="left:588.0px;width:400px;text-align:center;top:472.0px;"><span class="dg">223</span></div>
<div class="t cell" style="left:686.0px;width:400px;text-align:center;top:472.0px;"><span class="dg">456</span></div>
<div class="t cell" style="left:784.0px;width:400px;text-align:center;top:472.0px;"><span class="dg">256</span></div>
<div class="t cell" style="left:882.0px;width:400px;text-align:center;top:472.0px;"><span class="dg">756</span></div>
<div class="t cell" style="left:987.5px;width:400px;text-align:center;top:472.0px;"><span class="dg">216</span></div>
<div class="t cell" style="left:1100.5px;width:400px;text-align:center;top:472.0px;"><span class="dg">633</span></div>
<div class="t cell" style="left:1213.5px;width:400px;text-align:center;top:472.0px;"><span class="dg">523</span></div>
<div class="t cell sm" style="left:-137.5px;width:400px;text-align:center;top:509.5px;"><span class="dg">3</span></div>
<div class="t cell sm" style="left:-76.0px;width:400px;text-align:center;top:509.5px;"><span class="dg">1</span>组</div>
<div class="t cell" style="left:2.0px;width:400px;text-align:center;top:508.5px;">笛飞声</div>
<div class="t cell" style="left:98.0px;width:400px;text-align:center;top:508.5px;"><span class="dg">930</span></div>
<div class="t cell" style="left:196.0px;width:400px;text-align:center;top:508.5px;"><span class="dg">360</span></div>
<div class="t cell" style="left:294.0px;width:400px;text-align:center;top:508.5px;"><span class="dg">983</span></div>
<div class="t cell" style="left:392.0px;width:400px;text-align:center;top:508.5px;"><span class="dg">736</span></div>
<div class="t cell" style="left:490.0px;width:400px;text-align:center;top:508.5px;"><span class="dg">626</span></div>
<div class="t cell" style="left:588.0px;width:400px;text-align:center;top:508.5px;"><span class="dg">799</span></div>
<div class="t cell" style="left:686.0px;width:400px;text-align:center;top:508.5px;"><span class="dg">219</span></div>
<div class="t cell" style="left:784.0px;width:400px;text-align:center;top:508.5px;"><span class="dg">350</span></div>
<div class="t cell" style="left:882.0px;width:400px;text-align:center;top:508.5px;"><span class="dg">250</span></div>
<div class="t cell" style="left:987.5px;width:400px;text-align:center;top:508.5px;"><span class="dg">331</span></div>
<div class="t cell" style="left:1100.5px;width:400px;text-align:center;top:508.5px;"><span class="dg">284</span></div>
<div class="t cell" style="left:1213.5px;width:400px;text-align:center;top:508.5px;"><span class="dg">772</span></div>
<div class="t cell sm" style="left:-137.5px;width:400px;text-align:center;top:546.5px;"><span class="dg">4</span></div>
<div class="t cell sm" style="left:-76.0px;width:400px;text-align:center;top:546.5px;"><span class="dg">2</span>组</div>
<div class="t cell" style="left:2.0px;width:400px;text-align:center;top:545.5px;">乔婉娩</div>
<div class="t cell" style="left:98.0px;width:400px;text-align:center;top:545.5px;"><span class="dg">440</span></div>
<div class="t cell" style="left:196.0px;width:400px;text-align:center;top:545.5px;"><span class="dg">739</span></div>
<div class="t cell" style="left:294.0px;width:400px;text-align:center;top:545.5px;"><span class="dg">477</span></div>
<div class="t cell" style="left:392.0px;width:400px;text-align:center;top:545.5px;"><span class="dg">862</span></div>
<div class="t cell" style="left:490.0px;width:400px;text-align:center;top:545.5px;"><span class="dg">789</span></div>
<div class="t cell" style="left:588.0px;width:400px;text-align:center;top:545.5px;"><span class="dg">148</span></div>
<div class="t cell" style="left:686.0px;width:400px;text-align:center;top:545.5px;"><span class="dg">542</span></div>
<div class="t cell" style="left:784.0px;width:400px;text-align:center;top:545.5px;"><span class="dg">162</span></div>
<div class="t cell" style="left:882.0px;width:400px;text-align:center;top:545.5px;"><span class="dg">365</span></div>
<div class="t cell" style="left:987.5px;width:400px;text-align:center;top:545.5px;"><span class="dg">432</span></div>
<div class="t cell" style="left:1100.5px;width:400px;text-align:center;top:545.5px;"><span class="dg">901</span></div>
<div class="t cell" style="left:1213.5px;width:400px;text-align:center;top:545.5px;"><span class="dg">323</span></div>
<div class="t cell sm" style="left:-137.5px;width:400px;text-align:center;top:583.5px;"><span class="dg">5</span></div>
<div class="t cell sm" style="left:-76.0px;width:400px;text-align:center;top:583.5px;"><span class="dg">2</span>组</div>
<div class="t cell" style="left:2.0px;width:400px;text-align:center;top:582.5px;">角丽谯</div>
<div class="t cell" style="left:98.0px;width:400px;text-align:center;top:582.5px;"><span class="dg">925</span></div>
<div class="t cell" style="left:196.0px;width:400px;text-align:center;top:582.5px;"><span class="dg">292</span></div>
<div class="t cell" style="left:294.0px;width:400px;text-align:center;top:582.5px;"><span class="dg">375</span></div>
<div class="t cell" style="left:392.0px;width:400px;text-align:center;top:582.5px;"><span class="dg">892</span></div>
<div class="t cell" style="left:490.0px;width:400px;text-align:center;top:582.5px;"><span class="dg">347</span></div>
<div class="t cell" style="left:588.0px;width:400px;text-align:center;top:582.5px;"><span class="dg">171</span></div>
<div class="t cell" style="left:686.0px;width:400px;text-align:center;top:582.5px;"><span class="dg">207</span></div>
<div class="t cell" style="left:784.0px;width:400px;text-align:center;top:582.5px;"><span class="dg">260</span></div>
<div class="t cell" style="left:882.0px;width:400px;text-align:center;top:582.5px;"><span class="dg">586</span></div>
<div class="t cell" style="left:987.5px;width:400px;text-align:center;top:582.5px;"><span class="dg">162</span></div>
<div class="t cell" style="left:1100.5px;width:400px;text-align:center;top:582.5px;"><span class="dg">809</span></div>
<div class="t cell" style="left:1213.5px;width:400px;text-align:center;top:582.5px;"><span class="dg">604</span></div>
<div class="t cell sm" style="left:-137.5px;width:400px;text-align:center;top:620.5px;"><span class="dg">6</span></div>
<div class="t cell sm" style="left:-76.0px;width:400px;text-align:center;top:620.5px;"><span class="dg">2</span>组</div>
<div class="t cell" style="left:2.0px;width:400px;text-align:center;top:619.5px;">苏小慵</div>
<div class="t cell" style="left:98.0px;width:400px;text-align:center;top:619.5px;"><span class="dg">625</span></div>
<div class="t cell" style="left:196.0px;width:400px;text-align:center;top:619.5px;"><span class="dg">334</span></div>
<div class="t cell" style="left:294.0px;width:400px;text-align:center;top:619.5px;"><span class="dg">831</span></div>
<div class="t cell" style="left:392.0px;width:400px;text-align:center;top:619.5px;"><span class="dg">324</span></div>
<div class="t cell" style="left:490.0px;width:400px;text-align:center;top:619.5px;"><span class="dg">974</span></div>
<div class="t cell" style="left:588.0px;width:400px;text-align:center;top:619.5px;"><span class="dg">350</span></div>
<div class="t cell" style="left:686.0px;width:400px;text-align:center;top:619.5px;"><span class="dg">614</span></div>
<div class="t cell" style="left:784.0px;width:400px;text-align:center;top:619.5px;"><span class="dg">994</span></div>
<div class="t cell" style="left:882.0px;width:400px;text-align:center;top:619.5px;"><span class="dg">547</span></div>
<div class="t cell" style="left:987.5px;width:400px;text-align:center;top:619.5px;"><span class="dg">863 0</span></div>
<div class="t cell" style="left:1100.5px;width:400px;text-align:center;top:619.5px;"><span class="dg">688</span></div>
<div class="t cell" style="left:1213.5px;width:400px;text-align:center;top:619.5px;"><span class="dg">410</span></div>
<div class="t cell sm" style="left:-137.5px;width:400px;text-align:center;top:656.0px;"><span class="dg">7</span></div>
<div class="t cell sm" style="left:-76.0px;width:400px;text-align:center;top:656.0px;"><span class="dg">2</span>组</div>
<div class="t cell" style="left:2.0px;width:400px;text-align:center;top:655.0px;">何晓惠</div>
<div class="t cell" style="left:98.0px;width:400px;text-align:center;top:655.0px;"><span class="dg">808</span></div>
<div class="t cell" style="left:196.0px;width:400px;text-align:center;top:655.0px;"><span class="dg">633</span></div>
<div class="t cell" style="left:294.0px;width:400px;text-align:center;top:655.0px;"><span class="dg">778</span></div>
<div class="t cell" style="left:392.0px;width:400px;text-align:center;top:655.0px;"><span class="dg">890</span></div>
<div class="t cell" style="left:490.0px;width:400px;text-align:center;top:655.0px;"><span class="dg">925</span></div>
<div class="t cell" style="left:588.0px;width:400px;text-align:center;top:655.0px;"><span class="dg">395</span></div>
<div class="t cell" style="left:686.0px;width:400px;text-align:center;top:655.0px;"><span class="dg">924</span></div>
<div class="t cell" style="left:784.0px;width:400px;text-align:center;top:655.0px;"><span class="dg">319</span></div>
<div class="t cell" style="left:882.0px;width:400px;text-align:center;top:655.0px;"><span class="dg">626</span></div>
<div class="t cell" style="left:987.5px;width:400px;text-align:center;top:655.0px;"><span class="dg">304</span></div>
<div class="t cell" style="left:1100.5px;width:400px;text-align:center;top:655.0px;"><span class="dg">745</span></div>
<div class="t cell" style="left:1213.5px;width:400px;text-align:center;top:655.0px;"><span class="dg">889</span></div>
<div class="t cell sm" style="left:-137.5px;width:400px;text-align:center;top:690.0px;"><span class="dg">8</span></div>
<div class="t cell sm" style="left:-76.0px;width:400px;text-align:center;top:690.0px;"><span class="dg">2</span>组</div>
<div class="t cell" style="left:2.0px;width:400px;text-align:center;top:689.0px;">芊芊公主</div>
<div class="t cell" style="left:98.0px;width:400px;text-align:center;top:689.0px;"><span class="dg">167</span></div>
<div class="t cell" style="left:196.0px;width:400px;text-align:center;top:689.0px;"><span class="dg">195</span></div>
<div class="t cell" style="left:294.0px;width:400px;text-align:center;top:689.0px;"><span class="dg">730</span></div>
<div class="t cell" style="left:392.0px;width:400px;text-align:center;top:689.0px;"><span class="dg">446</span></div>
<div class="t cell" style="left:490.0px;width:400px;text-align:center;top:689.0px;"><span class="dg">151</span></div>
<div class="t cell" style="left:588.0px;width:400px;text-align:center;top:689.0px;"><span class="dg">145</span></div>
<div class="t cell" style="left:686.0px;width:400px;text-align:center;top:689.0px;"><span class="dg">943</span></div>
<div class="t cell" style="left:784.0px;width:400px;text-align:center;top:689.0px;"><span class="dg">467</span></div>
<div class="t cell" style="left:882.0px;width:400px;text-align:center;top:689.0px;"><span class="dg">908</span></div>
<div class="t cell" style="left:987.5px;width:400px;text-align:center;top:689.0px;"><span class="dg">115</span></div>
<div class="t cell" style="left:1100.5px;width:400px;text-align:center;top:689.0px;"><span class="dg">816</span></div>
<div class="t cell" style="left:1213.5px;width:400px;text-align:center;top:689.0px;"><span class="dg">682</span></div>
<div class="t cell sm" style="left:-137.5px;width:400px;text-align:center;top:724.0px;"><span class="dg">9</span></div>
<div class="t cell sm" style="left:-76.0px;width:400px;text-align:center;top:724.0px;"><span class="dg">3</span>组</div>
<div class="t cell" style="left:2.0px;width:400px;text-align:center;top:723.0px;">石水</div>
<div class="t cell" style="left:98.0px;width:400px;text-align:center;top:723.0px;"><span class="dg">398</span></div>
<div class="t cell" style="left:196.0px;width:400px;text-align:center;top:723.0px;"><span class="dg">384</span></div>
<div class="t cell" style="left:294.0px;width:400px;text-align:center;top:723.0px;"><span class="dg">114</span></div>
<div class="t cell" style="left:392.0px;width:400px;text-align:center;top:723.0px;"><span class="dg">390</span></div>
<div class="t cell" style="left:490.0px;width:400px;text-align:center;top:723.0px;"><span class="dg">270</span></div>
<div class="t cell" style="left:588.0px;width:400px;text-align:center;top:723.0px;"><span class="dg">228</span></div>
<div class="t cell" style="left:686.0px;width:400px;text-align:center;top:723.0px;"><span class="dg">986</span></div>
<div class="t cell" style="left:784.0px;width:400px;text-align:center;top:723.0px;"><span class="dg">744</span></div>
<div class="t cell" style="left:882.0px;width:400px;text-align:center;top:723.0px;"><span class="dg">772</span></div>
<div class="t cell" style="left:987.5px;width:400px;text-align:center;top:723.0px;"><span class="dg">832</span></div>
<div class="t cell" style="left:1100.5px;width:400px;text-align:center;top:723.0px;"><span class="dg">984</span></div>
<div class="t cell" style="left:1213.5px;width:400px;text-align:center;top:723.0px;"><span class="dg">634</span></div>
<div class="t cell sm" style="left:-137.5px;width:400px;text-align:center;top:758.0px;"><span class="dg">10</span></div>
<div class="t cell sm" style="left:-76.0px;width:400px;text-align:center;top:758.0px;"><span class="dg">3</span>组</div>
<div class="t cell" style="left:2.0px;width:400px;text-align:center;top:757.0px;">云彼丘</div>
<div class="t cell" style="left:98.0px;width:400px;text-align:center;top:757.0px;"><span class="dg">371</span></div>
<div class="t cell" style="left:196.0px;width:400px;text-align:center;top:757.0px;"><span class="dg">611</span></div>
<div class="t cell" style="left:294.0px;width:400px;text-align:center;top:757.0px;"><span class="dg">100</span></div>
<div class="t cell" style="left:392.0px;width:400px;text-align:center;top:757.0px;"><span class="dg">151</span></div>
<div class="t cell" style="left:490.0px;width:400px;text-align:center;top:757.0px;"><span class="dg">958</span></div>
<div class="t cell" style="left:588.0px;width:400px;text-align:center;top:757.0px;"><span class="dg">565</span></div>
<div class="t cell" style="left:686.0px;width:400px;text-align:center;top:757.0px;"><span class="dg">909</span></div>
<div class="t cell" style="left:784.0px;width:400px;text-align:center;top:757.0px;"><span class="dg">600</span></div>
<div class="t cell" style="left:882.0px;width:400px;text-align:center;top:757.0px;"><span class="dg">569</span></div>
<div class="t cell" style="left:987.5px;width:400px;text-align:center;top:757.0px;"><span class="dg">686</span></div>
<div class="t cell" style="left:1100.5px;width:400px;text-align:center;top:757.0px;"><span class="dg">457</span></div>
<div class="t cell" style="left:1213.5px;width:400px;text-align:center;top:757.0px;"><span class="dg">568</span></div>
<div class="t cell sm" style="left:-137.5px;width:400px;text-align:center;top:793.5px;"><span class="dg">11</span></div>
<div class="t cell sm" style="left:-76.0px;width:400px;text-align:center;top:793.5px;"><span class="dg">3</span>组</div>
<div class="t cell" style="left:2.0px;width:400px;text-align:center;top:792.5px;">顾九思</div>
<div class="t cell" style="left:98.0px;width:400px;text-align:center;top:792.5px;"><span class="dg">813</span></div>
<div class="t cell" style="left:196.0px;width:400px;text-align:center;top:792.5px;"><span class="dg">274</span></div>
<div class="t cell" style="left:294.0px;width:400px;text-align:center;top:792.5px;"><span class="dg">660</span></div>
<div class="t cell" style="left:392.0px;width:400px;text-align:center;top:792.5px;"><span class="dg">596</span></div>
<div class="t cell" style="left:490.0px;width:400px;text-align:center;top:792.5px;"><span class="dg">770</span></div>
<div class="t cell" style="left:588.0px;width:400px;text-align:center;top:792.5px;"><span class="dg">661</span></div>
<div class="t cell" style="left:686.0px;width:400px;text-align:center;top:792.5px;"><span class="dg">188</span></div>
<div class="t cell" style="left:784.0px;width:400px;text-align:center;top:792.5px;"><span class="dg">662</span></div>
<div class="t cell" style="left:882.0px;width:400px;text-align:center;top:792.5px;"><span class="dg">457</span></div>
<div class="t cell" style="left:987.5px;width:400px;text-align:center;top:792.5px;"><span class="dg">323</span></div>
<div class="t cell" style="left:1100.5px;width:400px;text-align:center;top:792.5px;"><span class="dg">109</span></div>
<div class="t cell" style="left:1213.5px;width:400px;text-align:center;top:792.5px;"><span class="dg">298</span></div>
<div class="t cell sm" style="left:-137.5px;width:400px;text-align:center;top:830.5px;"><span class="dg">12</span></div>
<div class="t cell sm" style="left:-76.0px;width:400px;text-align:center;top:830.5px;"><span class="dg">3</span>组</div>
<div class="t cell" style="left:2.0px;width:400px;text-align:center;top:829.5px;">柳玉茹</div>
<div class="t cell" style="left:98.0px;width:400px;text-align:center;top:829.5px;"><span class="dg">485</span></div>
<div class="t cell" style="left:196.0px;width:400px;text-align:center;top:829.5px;"><span class="dg">568</span></div>
<div class="t cell" style="left:294.0px;width:400px;text-align:center;top:829.5px;"><span class="dg">485</span></div>
<div class="t cell" style="left:392.0px;width:400px;text-align:center;top:829.5px;"><span class="dg">223</span></div>
<div class="t cell" style="left:490.0px;width:400px;text-align:center;top:829.5px;"><span class="dg">734</span></div>
<div class="t cell" style="left:588.0px;width:400px;text-align:center;top:829.5px;"><span class="dg">229</span></div>
<div class="t cell" style="left:686.0px;width:400px;text-align:center;top:829.5px;"><span class="dg">768</span></div>
<div class="t cell" style="left:784.0px;width:400px;text-align:center;top:829.5px;"><span class="dg">883</span></div>
<div class="t cell" style="left:882.0px;width:400px;text-align:center;top:829.5px;"><span class="dg">202</span></div>
<div class="t cell" style="left:987.5px;width:400px;text-align:center;top:829.5px;"><span class="dg">963</span></div>
<div class="t cell" style="left:1100.5px;width:400px;text-align:center;top:829.5px;"><span class="dg">683</span></div>
<div class="t cell" style="left:1213.5px;width:400px;text-align:center;top:829.5px;"><span class="dg">617</span></div>
<div class="t cell sm" style="left:-137.5px;width:400px;text-align:center;top:867.5px;"><span class="dg">13</span></div>
<div class="t cell sm" style="left:-76.0px;width:400px;text-align:center;top:867.5px;"><span class="dg">3</span>组</div>
<div class="t cell" style="left:2.0px;width:400px;text-align:center;top:866.5px;">洛子商</div>
<div class="t cell" style="left:98.0px;width:400px;text-align:center;top:866.5px;"><span class="dg">287</span></div>
<div class="t cell" style="left:196.0px;width:400px;text-align:center;top:866.5px;"><span class="dg">784</span></div>
<div class="t cell" style="left:294.0px;width:400px;text-align:center;top:866.5px;"><span class="dg">833</span></div>
<div class="t cell" style="left:392.0px;width:400px;text-align:center;top:866.5px;"><span class="dg">811</span></div>
<div class="t cell" style="left:490.0px;width:400px;text-align:center;top:866.5px;"><span class="dg">103</span></div>
<div class="t cell" style="left:588.0px;width:400px;text-align:center;top:866.5px;"><span class="dg">784</span></div>
<div class="t cell" style="left:686.0px;width:400px;text-align:center;top:866.5px;"><span class="dg">558</span></div>
<div class="t cell" style="left:784.0px;width:400px;text-align:center;top:866.5px;"><span class="dg">1000</span></div>
<div class="t cell" style="left:882.0px;width:400px;text-align:center;top:866.5px;"><span class="dg">653</span></div>
<div class="t cell" style="left:987.5px;width:400px;text-align:center;top:866.5px;"><span class="dg">254</span></div>
<div class="t cell" style="left:1100.5px;width:400px;text-align:center;top:866.5px;"><span class="dg">463</span></div>
<div class="t cell" style="left:1213.5px;width:400px;text-align:center;top:866.5px;"><span class="dg">955</span></div>
<div class="t cell sm" style="left:-137.5px;width:400px;text-align:center;top:904.5px;"><span class="dg">14</span></div>
<div class="t cell sm" style="left:-76.0px;width:400px;text-align:center;top:904.5px;"><span class="dg">3</span>组</div>
<div class="t cell" style="left:2.0px;width:400px;text-align:center;top:903.5px;">云襄</div>
<div class="t cell" style="left:98.0px;width:400px;text-align:center;top:903.5px;"><span class="dg">911</span></div>
<div class="t cell" style="left:196.0px;width:400px;text-align:center;top:903.5px;"><span class="dg">313</span></div>
<div class="t cell" style="left:294.0px;width:400px;text-align:center;top:903.5px;"><span class="dg">717</span></div>
<div class="t cell" style="left:392.0px;width:400px;text-align:center;top:903.5px;"><span class="dg">495</span></div>
<div class="t cell" style="left:490.0px;width:400px;text-align:center;top:903.5px;"><span class="dg">962</span></div>
<div class="t cell" style="left:588.0px;width:400px;text-align:center;top:903.5px;"><span class="dg">543</span></div>
<div class="t cell" style="left:686.0px;width:400px;text-align:center;top:903.5px;"><span class="dg">833</span></div>
<div class="t cell" style="left:784.0px;width:400px;text-align:center;top:903.5px;"><span class="dg">830</span></div>
<div class="t cell" style="left:882.0px;width:400px;text-align:center;top:903.5px;"><span class="dg">596</span></div>
<div class="t cell" style="left:987.5px;width:400px;text-align:center;top:903.5px;"><span class="dg">934</span></div>
<div class="t cell" style="left:1100.5px;width:400px;text-align:center;top:903.5px;"><span class="dg">880</span></div>
<div class="t cell" style="left:1213.5px;width:400px;text-align:center;top:903.5px;"><span class="dg">905</span></div>
<div class="t cell sm" style="left:-137.5px;width:400px;text-align:center;top:941.5px;"><span class="dg">15</span></div>
<div class="t cell sm" style="left:-76.0px;width:400px;text-align:center;top:941.5px;"><span class="dg">3</span>组</div>
<div class="t cell" style="left:2.0px;width:400px;text-align:center;top:940.5px;">寇莲衣</div>
<div class="t cell" style="left:98.0px;width:400px;text-align:center;top:940.5px;"><span class="dg">478</span></div>
<div class="t cell" style="left:196.0px;width:400px;text-align:center;top:940.5px;"><span class="dg">547</span></div>
<div class="t cell" style="left:294.0px;width:400px;text-align:center;top:940.5px;"><span class="dg">132</span></div>
<div class="t cell" style="left:392.0px;width:400px;text-align:center;top:940.5px;"><span class="dg">645</span></div>
<div class="t cell" style="left:490.0px;width:400px;text-align:center;top:940.5px;"><span class="dg">102</span></div>
<div class="t cell" style="left:588.0px;width:400px;text-align:center;top:940.5px;"><span class="dg">101</span></div>
<div class="t cell" style="left:686.0px;width:400px;text-align:center;top:940.5px;"><span class="dg">1000</span></div>
<div class="t cell" style="left:784.0px;width:400px;text-align:center;top:940.5px;"><span class="dg">479</span></div>
<div class="t cell" style="left:882.0px;width:400px;text-align:center;top:940.5px;"><span class="dg">531</span></div>
<div class="t cell" style="left:987.5px;width:400px;text-align:center;top:940.5px;"><span class="dg">229</span></div>
<div class="t cell" style="left:1100.5px;width:400px;text-align:center;top:940.5px;"><span class="dg">232</span></div>
<div class="t cell" style="left:1213.5px;width:400px;text-align:center;top:940.5px;"><span class="dg">463</span></div>
<div class="t cell sm" style="left:-137.5px;width:400px;text-align:center;top:978.5px;"><span class="dg">16</span></div>
<div class="t cell sm" style="left:-76.0px;width:400px;text-align:center;top:978.5px;"><span class="dg">3</span>组</div>
<div class="t cell" style="left:2.0px;width:400px;text-align:center;top:977.5px;">苏鸣玉</div>
<div class="t cell" style="left:98.0px;width:400px;text-align:center;top:977.5px;"><span class="dg">825</span></div>
<div class="t cell" style="left:196.0px;width:400px;text-align:center;top:977.5px;"><span class="dg">227</span></div>
<div class="t cell" style="left:294.0px;width:400px;text-align:center;top:977.5px;"><span class="dg">551</span></div>
<div class="t cell" style="left:392.0px;width:400px;text-align:center;top:977.5px;"><span class="dg">236</span></div>
<div class="t cell" style="left:490.0px;width:400px;text-align:center;top:977.5px;"><span class="dg">780</span></div>
<div class="t cell" style="left:588.0px;width:400px;text-align:center;top:977.5px;"><span class="dg">378</span></div>
<div class="t cell" style="left:686.0px;width:400px;text-align:center;top:977.5px;"><span class="dg">711</span></div>
<div class="t cell" style="left:784.0px;width:400px;text-align:center;top:977.5px;"><span class="dg">204</span></div>
<div class="t cell" style="left:882.0px;width:400px;text-align:center;top:977.5px;"><span class="dg">713</span></div>
<div class="t cell" style="left:987.5px;width:400px;text-align:center;top:977.5px;"><span class="dg">634</span></div>
<div class="t cell" style="left:1100.5px;width:400px;text-align:center;top:977.5px;"><span class="dg">592</span></div>
<div class="t cell" style="left:1213.5px;width:400px;text-align:center;top:977.5px;"><span class="dg">127</span></div>
<svg style="left:35px;top:540px" width="15" height="21" viewBox="0 0 15 21"><path d="M1.5,1.5 L1.5,17 L5,13.5 L8,19.5 L10.5,18.5 L7.8,12.5 L13,12.5 Z" fill="#fff" stroke="#000" stroke-width="1.1" stroke-linejoin="round"/></svg>
</body></html>
